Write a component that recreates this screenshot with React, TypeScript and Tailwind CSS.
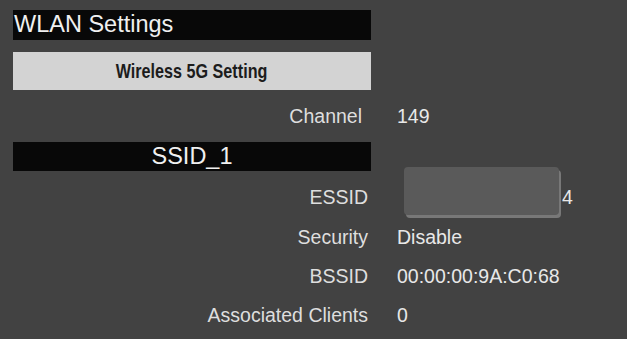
import React from 'react';

const font = { fontFamily: '"Liberation Sans", Arial, sans-serif' };

const InfoRow: React.FC<{ label: string; value: React.ReactNode; labelPad?: string }> = ({ label, value, labelPad = '' }) => (
    <div className="flex h-[39px] items-center">
        <div className={`w-[368px] text-right text-[#dedede] ${labelPad}`}>{label}</div>
        <div className="ml-[29px] text-[#e8e8e8]">{value}</div>
    </div>
);

const SectionBar: React.FC<{ title: string; center?: boolean }> = ({ title, center }) => (
    <div
        className={`ml-[13px] w-[358px] bg-[#080808] text-[23.5px] leading-none text-[#f0f0f0] flex items-center ${
            center ? 'justify-center h-[29px]' : 'pl-[1px] h-[30px]'
        }`}
    >
        {title}
    </div>
);

const App: React.FC = () => {
    return (
        <div className="w-[627px] h-[339px] bg-[#424242] overflow-hidden pt-[10px] text-[19.5px] leading-[22px]" style={font}>
            <SectionBar title="WLAN Settings" />

            <div className="ml-[13px] mt-[12px] w-[358px] h-[38px] bg-[#d3d3d3] flex items-center justify-center">
                <span className="inline-block scale-x-[0.77] font-bold text-[21px] text-[#1c1c1c] whitespace-nowrap">
                    Wireless 5G Setting
                </span>
            </div>

            <div className="flex h-[52px] items-center">
                <div className="w-[368px] text-right pr-[6px] text-[#dedede]">Channel</div>
                <div className="ml-[29px] text-[#e8e8e8]">149</div>
            </div>

            <SectionBar title="SSID_1" center />

            {/* ESSID value is covered by a grey box in the capture */}
            <div className="flex h-[46px] items-start">
                <div className="w-[368px] text-right pt-[15px] text-[#dedede]">ESSID</div>
                <div className="ml-[36px] flex items-start">
                    <div className="mt-[-4px] w-[155px] h-[48px] rounded-[4px] bg-[#5a5a5a] shadow-[2px_3px_0_0_#787878]" />
                    <span className="ml-[3px] pt-[15px] text-[#e8e8e8]">4</span>
                </div>
            </div>

            <InfoRow label="Security" value="Disable" />
            <InfoRow label="BSSID" value="00:00:00:9A:C0:68" />
            <InfoRow label="Associated Clients" value="0" />
        </div>
    );
};

export default App;
